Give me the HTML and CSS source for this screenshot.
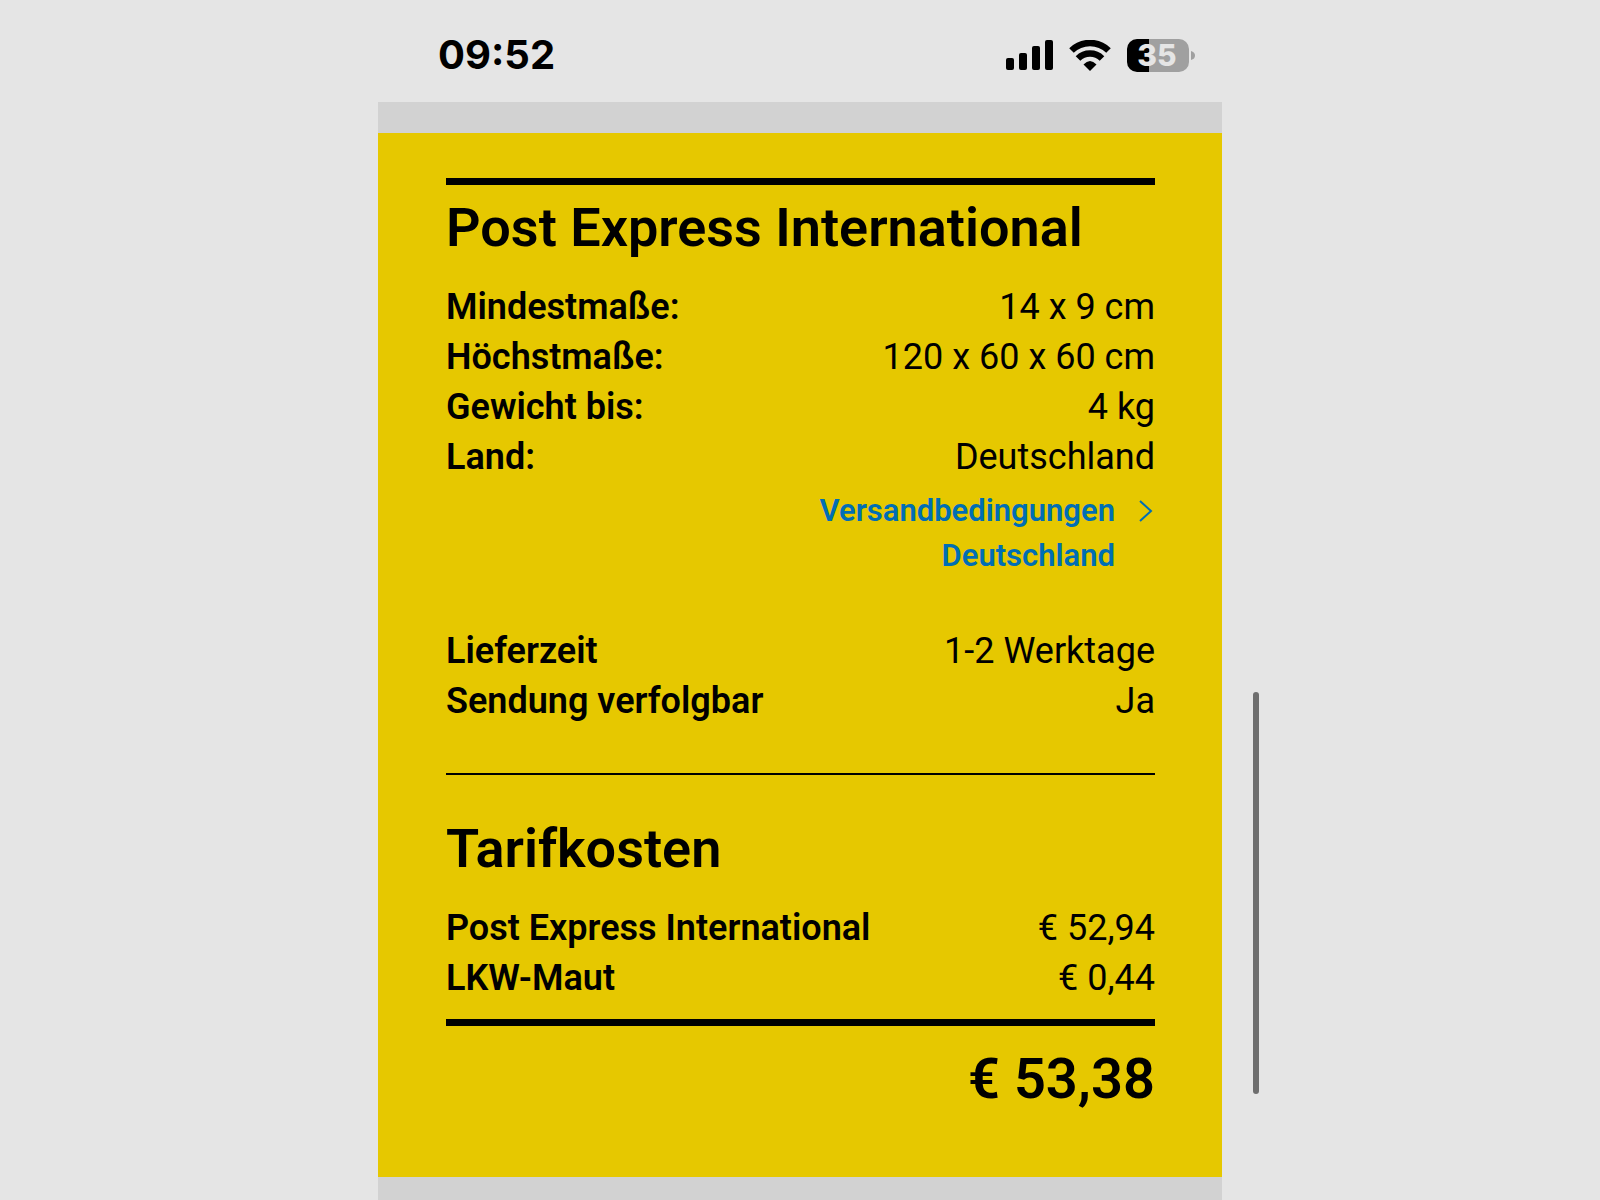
FILE: index.html
```html
<!DOCTYPE html>
<html lang="de">
<head>
<meta charset="utf-8">
<meta name="viewport" content="width=device-width, initial-scale=1">
<title>Post Express International</title>
<link rel="stylesheet" href="styles.css">
</head>
<body>
<div class="screen">
  <header class="status-bar">
    <time class="clock">09:52</time>
    <div class="status-icons">
      <svg width="47" height="31" viewBox="0 0 47 31" role="img" aria-label="Mobilfunk">
        <rect x="0" y="18" width="8" height="12" rx="2"/>
        <rect x="13" y="13" width="8" height="17" rx="2"/>
        <rect x="26" y="6" width="8" height="24" rx="2"/>
        <rect x="39" y="0" width="8" height="30" rx="2"/>
      </svg>
      <svg width="42" height="31" viewBox="0 0 42 31" role="img" aria-label="WLAN">
        <path d="M2.500 10.500A26.500 26.500 0 0 1 39.500 10.500" fill="none" stroke="#000" stroke-width="6.500"/>
        <path d="M9 18.500A17 17 0 0 1 33 18.500" fill="none" stroke="#000" stroke-width="6.500"/>
        <path d="M14.500 24.500Q21 17.500 27.500 24.500L21 31Z"/>
      </svg>
      <svg width="69" height="43" viewBox="0 -5 69 43" role="img" aria-label="Akku 35 Prozent">
        <path d="M22 0H52a10 10 0 0 1 10 10V23a10 10 0 0 1-10 10H22Z" fill="#a0a0a0"/>
        <path d="M22 0H10a10 10 0 0 0-10 10V23a10 10 0 0 0 10 10H22Z"/>
        <path d="M64 12Q68 13 68 16.500T64 21Z" fill="#a0a0a0"/>
        <text class="battery-level" x="30" y="27" text-anchor="middle">35</text>
      </svg>
    </div>
  </header>

  <main class="page">
    <section class="card">
      <div class="product">
        <h1 class="title">Post Express International</h1>
        <dl class="rows">
          <div class="row"><dt>Mindestmaße:</dt><dd>14 x 9 cm</dd></div>
          <div class="row"><dt>Höchstmaße:</dt><dd>120 x 60 x 60 cm</dd></div>
          <div class="row"><dt>Gewicht bis:</dt><dd>4 kg</dd></div>
          <div class="row"><dt>Land:</dt><dd>Deutschland</dd></div>
        </dl>
        <a class="terms" href="#versandbedingungen">
          <span>Versandbedingungen<br>Deutschland</span>
          <svg width="14" height="22" viewBox="0 0 14 22" aria-hidden="true"><path d="M1 1L12 11L1 21" fill="none" stroke="currentColor" stroke-width="2"/></svg>
        </a>
        <dl class="rows rows-delivery">
          <div class="row"><dt>Lieferzeit</dt><dd>1-2 Werktage</dd></div>
          <div class="row"><dt>Sendung verfolgbar</dt><dd>Ja</dd></div>
        </dl>
      </div>
      <div class="costs">
        <h2 class="title">Tarifkosten</h2>
        <dl class="rows">
          <div class="row"><dt>Post Express International</dt><dd>€ 52,94</dd></div>
          <div class="row"><dt>LKW-Maut</dt><dd>€ 0,44</dd></div>
        </dl>
      </div>
      <p class="total">€ 53,38</p>
    </section>
  </main>
  <div class="scroll-thumb"></div>
</div>
</body>
</html>
```
FILE: styles.css
```css
* {
  box-sizing: border-box;
}

body {
  margin: 0;
  background: #e5e5e5;
  color: #000;
  font-family: Roboto, "Noto Sans", sans-serif;
}

h1, h2, p, dl, dd {
  margin: 0;
}

.screen {
  position: relative;
  display: flex;
  flex-direction: column;
  width: 100%;
  max-width: 920px;
  min-height: 100vh;
  margin: 0 auto;
}

.status-bar {
  display: flex;
  align-items: center;
  justify-content: space-between;
  padding: 30px 64px 22px 98px;
}

.clock {
  font: 700 40px/50px Inter, sans-serif;
}

.status-icons {
  display: flex;
  align-items: center;
  gap: 16px;
}

.battery-level {
  fill: #e5e5e5;
  font: 800 30px Inter, sans-serif;
}

.page {
  flex: 1;
  width: 100%;
  max-width: 844px;
  margin: 0 auto;
  padding: 31px 0 23px;
  background: #d2d2d2;
}

.card {
  padding: 45px 67px 66px 68px;
  background: #e6c800;
}

.product {
  padding: 11px 0 47px;
  border-top: 7px solid #000;
  border-bottom: 2px solid #000;
}

.costs {
  padding: 42px 0 16px;
  border-bottom: 7px solid #000;
}

.title {
  margin-bottom: 22px;
  font-size: 54px;
  font-weight: 600;
  line-height: 64px;
}

.row {
  display: flex;
  justify-content: space-between;
  gap: 16px;
  font-size: 36px;
  line-height: 50px;
}

.row dt {
  font-weight: 600;
}

.row dd {
  text-align: right;
}

.rows-delivery {
  margin-top: 48px;
}

.terms {
  display: flex;
  justify-content: flex-end;
  gap: 24px;
  margin-top: 6px;
  padding-right: 2px;
  color: #006eb4;
  font-size: 31px;
  font-weight: 600;
  line-height: 45px;
  text-align: right;
  text-decoration: none;
}

.terms svg {
  margin-top: 12px;
}

.total {
  padding-top: 21px;
  font-size: 56px;
  font-weight: 600;
  line-height: 64px;
  text-align: right;
}

.scroll-thumb {
  position: absolute;
  top: 692px;
  right: 1px;
  width: 6px;
  height: 402px;
  border-radius: 3px;
  background: #6e6e6e;
}
```
